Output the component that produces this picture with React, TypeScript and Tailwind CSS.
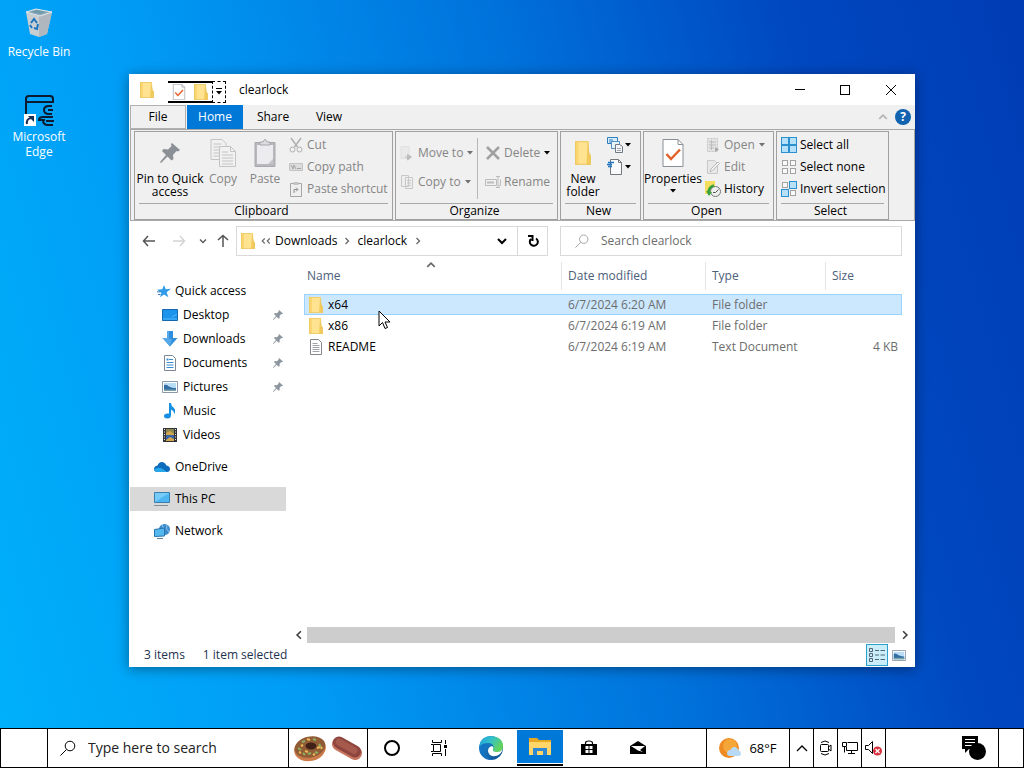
import { type ReactNode } from "react";
import { clsx } from "clsx";

type IconProps = { className?: string };

function FolderIcon({ className = "h-4 w-4" }: IconProps) {
  return (
    <svg viewBox="1 1 14 16" className={className} preserveAspectRatio="none" aria-hidden>
      <path d="M1 1h12v16H1z" fill="#ffe391" />
      <path d="M1 1h3v16H1z" fill="#fbd56f" />
      <path d="M12 2l2 8h1v7h-4z" fill="#f2ca5c" />
      <path d="M1.500 1.500h11l.5 9 1.500 1v5h-13z" fill="none" stroke="#ecc864" strokeWidth="0.800" />
    </svg>
  );
}

function PinIcon({ className = "h-3 w-3" }: IconProps) {
  return (
    <svg viewBox="0 0 20 20" className={className} fill="currentColor" aria-hidden>
      <path d="M12 0l8 7-2 1.500-1.500-.5-3.500 4 .5 4-2 1.500-4-4L1 20l-1-1 6-7-4-4 1.500-2 4.500.5 3.500-3.500-.5-2z" />
    </svg>
  );
}

function PropertiesIcon({ className = "h-7 w-6" }: IconProps) {
  return (
    <svg viewBox="0 0 22 28" className={className} aria-hidden>
      <path d="M1 .5h15l5 5v22H1z" fill="#fff" stroke="#8a8f96" />
      <path d="M16 .5v5h5" fill="none" stroke="#8a8f96" />
      <path d="M4.500 15l4.500 5 9-9.500" fill="none" stroke="#e2622a" strokeWidth="2.500" />
    </svg>
  );
}

function CopyIcon({ className = "h-[30px] w-7" }: IconProps) {
  return (
    <svg viewBox="0 0 28 30" className={className} fill="#f1f1f1" stroke="#c4c4c4" aria-hidden>
      <path d="M2 1.500h11l4 4v16H2z" />
      <path d="M4.500 6h8M4.500 9h8M4.500 12h6M4.500 15h6M4.500 18h6" />
      <path d="M10.500 8.500h11l5 5v15h-16z" />
      <path d="M21.500 8.500v5h5M13 14h6M13 17h11M13 20h11M13 23h11M13 26h11" fill="none" />
    </svg>
  );
}

function PasteIcon() {
  return (
    <svg viewBox="0 0 22 28" className="h-7 w-[22px]" aria-hidden>
      <path d="M1 3.500h20v24H1z" fill="#b9b9bd" stroke="#a9a9ae" />
      <path d="M3 6h16v19H3z" fill="#ececee" />
      <path d="M14 25l5-5v5z" fill="#c4c4c8" />
      <path d="M6 6V3h3q2-5 4 0h3v3z" fill="#dedee0" stroke="#a5a5aa" />
    </svg>
  );
}

function CutIcon() {
  return (
    <svg viewBox="0 0 14 16" className="h-4 w-3.5" fill="none" stroke="#b0b0b0" aria-hidden>
      <path d="M2 1l6.500 9M12 1L5.500 10" strokeWidth="1.500" />
      <circle cx="3.500" cy="12.500" r="2.500" />
      <circle cx="10.500" cy="12.500" r="2.500" />
    </svg>
  );
}

function CopyPathIcon() {
  return (
    <svg viewBox="0 0 14 10" className="h-2.5 w-3.5" aria-hidden>
      <path d="M.5 1.500h13v7H.5z" fill="#dcdcdc" stroke="#c4c4c4" />
      <path d="M2 3l2 4 1-4 2 4M8 6.500h4" fill="none" stroke="#a4a4a4" />
    </svg>
  );
}

function PasteShortcutIcon() {
  return (
    <svg viewBox="0 0 14 15" className="h-[15px] w-3.5" aria-hidden>
      <path d="M1.500 1.500h11v13h-11z" fill="#efefef" stroke="#a5a5a5" />
      <path d="M4.500 0h5v3h-5z" fill="#c4c4c4" />
      <path d="M5 11V7.500h3.500M7 5.500l2 2-2 2" fill="none" stroke="#909090" />
    </svg>
  );
}

function MoveIcon() {
  return (
    <svg viewBox="0 0 14 16" className="h-4 w-3.5" aria-hidden>
      <path d="M1 1.500h8v12H1z" fill="#e9e9e9" stroke="#e0e0e0" />
      <path d="M5 12h4M7.500 9.500l4 2.500-4 3z" fill="#bcbcbc" stroke="#bcbcbc" />
    </svg>
  );
}

function CopyToIcon() {
  return (
    <svg viewBox="0 0 14 16" className="h-4 w-3.5" fill="#eee" stroke="#c8c8c8" aria-hidden>
      <path d="M1.500 1.500h7v11h-7zM5.500 3.500h7v11h-7z" />
      <path d="M7 6.500h4M7 9h4M7 11.500h4" />
    </svg>
  );
}

function DeleteIcon() {
  return (
    <svg viewBox="0 0 14 14" className="h-3.5 w-3.5" aria-hidden>
      <path d="M1 1l12 12M13 1L1 13" stroke="#a0a0a0" strokeWidth="2.500" />
    </svg>
  );
}

function RenameIcon() {
  return (
    <svg viewBox="0 0 16 14" className="h-3.5 w-4" fill="none" stroke="#bcbcbc" aria-hidden>
      <path d="M.5 4.500h11v6H.5zM15.500 4.500v6h-2M11 1.500h4M13 1.500v11M11 12.500h4" />
      <path d="M2 7.500h7" strokeWidth="2" />
    </svg>
  );
}

function NewItemIcon() {
  return (
    <svg viewBox="0 0 16 16" className="h-4 w-4" aria-hidden>
      <path d="M.5.5h10v6H.5z" fill="#dbeefb" stroke="#2f7ec0" />
      <path d="M2 3h4M2 5h3" stroke="#2f7ec0" />
      <path d="M4.500 4.500h8v7h-8z" fill="#e8f4fc" stroke="#5591c2" />
      <path d="M8.500 7.500h4l3 2v6h-7z" fill="#f5f5f5" stroke="#707a85" />
      <path d="M10 11.500h4M10 13.500h4" stroke="#a2a9b0" />
    </svg>
  );
}

function EasyAccessIcon() {
  return (
    <svg viewBox="0 0 16 16" className="h-4 w-4" aria-hidden>
      <path d="M3.500.5h8l3 3v12h-11z" fill="#fafafa" stroke="#75797e" />
      <path d="M11.500.5v3h3" fill="none" stroke="#75797e" />
      <path d="M1 3.500h6M0 5.500h5M1 7.500h4" fill="none" stroke="#1f74c4" strokeWidth="1.300" />
    </svg>
  );
}

function OpenIcon() {
  return (
    <svg viewBox="0 0 14 16" className="h-4 w-3.5" aria-hidden>
      <path d="M1.500 1.500h10v13h-10z" fill="#e4e4e4" stroke="#c4c4c4" strokeDasharray="2 1" />
      <path d="M3 5h7M3 8h7M3 11h5M5.500 3v10" stroke="#bcbcbc" />
      <path d="M9 10l4 2.500L9 15z" fill="#a9a9a9" />
    </svg>
  );
}

function EditIcon() {
  return (
    <svg viewBox="0 0 14 16" className="h-4 w-3.5" aria-hidden>
      <path d="M1.500 1.500h7l3 3v10h-10z" fill="#e8e8e8" stroke="#c8c8c8" />
      <path d="M4 13l1-3 7-7 1.500 1.500-7 7z" fill="#f5f5f5" stroke="#b9b9b9" />
    </svg>
  );
}

function HistoryIcon() {
  return (
    <svg viewBox="0 0 16 16" className="h-4 w-4" aria-hidden>
      <path d="M0 0h10v13H0z" fill="#f5de5e" />
      <circle cx="10.500" cy="10.500" r="5" fill="#edf0ed" stroke="#777" />
      <path d="M10.500 11.500l3-3M10.500 11.500H8" fill="none" stroke="#555" />
      <path d="M3.500 12q0-6 5.500-7.500" fill="none" stroke="#38a13c" strokeWidth="2.500" />
      <path d="M1 10l3 5 3-4z" fill="#38a13c" />
    </svg>
  );
}

function TilesIcon({ filled }: { filled: boolean[] }) {
  const spots = [
    [1, 1],
    [9, 1],
    [1, 9],
    [9, 9],
  ];
  return (
    <svg viewBox="0 0 16 16" className="h-4 w-4" aria-hidden>
      {spots.map(([x, y], i) => (
        <rect
          key={i}
          x={x - (filled[i] ? 0.5 : -0.5)}
          y={y - (filled[i] ? 0.5 : -0.5)}
          width={filled[i] ? 7 : 5}
          height={filled[i] ? 7 : 5}
          fill={filled[i] ? "#b5e2fa" : "#fafafa"}
          stroke={filled[i] ? "#2b8fd0" : "#a3a3a3"}
        />
      ))}
    </svg>
  );
}

function Caret({ className = "text-black" }: IconProps) {
  return (
    <svg viewBox="0 0 6 4" className={clsx("h-1 w-1.5 shrink-0", className)} fill="currentColor" aria-hidden>
      <path d="M0 0h6L3 3.500z" />
    </svg>
  );
}

function Chevron({ className = "h-2 w-1.5" }: IconProps) {
  return (
    <svg viewBox="0 0 6 8" className={className} fill="none" stroke="currentColor" strokeWidth="1.300" aria-hidden>
      <path d="M1.500 1l3 3-3 3" />
    </svg>
  );
}

function StarIcon() {
  return (
    <svg viewBox="0 0 16 16" className="h-3.5 w-3.5" aria-hidden>
      <path d="M8 1l2 5 6-.5-5 4L13 15l-5-3-4.500 3 1.500-5L0 6.500 6 6z" fill="#2f9be8" />
      <path d="M0 9h4M1 12h3" stroke="#1667ad" />
    </svg>
  );
}

function DesktopIcon() {
  return (
    <svg viewBox="0 0 16 14" className="h-3.5 w-4" aria-hidden>
      <path d="M.5 1.500h15v11H.5z" fill="#1c94ec" stroke="#1468b2" />
      <path d="M1 11h14M10 9l5-3" stroke="#55b8f8" />
    </svg>
  );
}

function DownloadsIcon() {
  return (
    <svg viewBox="0 0 16 16" className="h-4 w-4" aria-hidden>
      <path d="M5 0h6v7h4.500L8 15.500.5 7H5z" fill="#2f8fdc" />
      <path d="M5 0h2v8h3L8 15.500.5 7H5z" fill="#55a9e8" />
    </svg>
  );
}

function DocumentsIcon() {
  return (
    <svg viewBox="0 0 16 16" className="h-4 w-4" aria-hidden>
      <path d="M2.500.5h8l3 3v12h-11z" fill="#fff" stroke="#7b8794" />
      <path d="M7 4.500h4M4.500 7.500h7M4.500 10h7M4.500 12.500h7" stroke="#3a8bd0" />
      <path d="M4.500 3.500h2v2h-2z" fill="#3a8bd0" />
    </svg>
  );
}

function PicturesIcon({ className = "h-3 w-4" }: IconProps) {
  return (
    <svg viewBox="0 0 16 12" className={className} preserveAspectRatio="none" aria-hidden>
      <path d="M.5.5h15v11H.5z" fill="#fff" stroke="#8b98a7" />
      <path d="M2 2h12v8H2z" fill="#b8dcf6" />
      <path d="M2 4q3-1 5 1.500 4 2 7 1.500v3H2z" fill="#326da5" />
      <path d="M2 8.500h12V10H2z" fill="#79a5a4" />
    </svg>
  );
}

function MusicIcon() {
  return (
    <svg viewBox="0 0 16 16" className="h-4 w-4" aria-hidden>
      <path d="M7 0h2q0 3 2.500 4.500 3 2.500.5 7 .5-3.500-3-5V12q0 3.500-3.500 3.500Q2 15.500 2 13q0-2.500 3.500-2.500H7z" fill="#168fe3" />
    </svg>
  );
}

function VideosIcon() {
  return (
    <svg viewBox="0 0 16 16" className="h-4 w-4" aria-hidden>
      <path d="M1 1h14v14H1z" fill="#323338" />
      <path d="M4 2h8v6H4z" fill="#8a8850" />
      <path d="M4 8h8v6H4z" fill="#3564a8" />
      <path d="M4 6l4-2 4 3v1H4zM4 13l4-3 4 2v2H4z" fill="#d3a54d" />
      <path d="M2.500 2v12M13.500 2v12" stroke="#e5e5e5" strokeDasharray="1 1.500" />
    </svg>
  );
}

function CloudIcon() {
  return (
    <svg viewBox="0 0 16 12" className="h-3 w-4" aria-hidden>
      <path d="M3.500 11Q0 11 0 8t3.500-3.500Q5 .5 8.500 1q3 .5 4 3.500Q16 5 16 8t-3 3z" fill="#0f6cbd" />
      <path d="M3.500 11Q1 11 0 8.500q4-3 8-1l5 3.500z" fill="#28a8ea" />
    </svg>
  );
}

function ComputerIcon() {
  return (
    <svg viewBox="0 0 16 16" className="h-4 w-4" aria-hidden>
      <path d="M.5 1.500h15v10H.5z" fill="#4db5f2" stroke="#3a7eae" />
      <path d="M1 2h14L1 11z" fill="#77cbf8" />
      <path d="M0 14.500h14" stroke="#7f8d99" />
    </svg>
  );
}

function NetworkIcon() {
  return (
    <svg viewBox="0 0 16 16" className="h-4 w-4" aria-hidden>
      <circle cx="10.500" cy="6.500" r="5.500" fill="#3c8ccb" />
      <path d="M8 2q3 3 2 9M13 2q-2 4 2 7" fill="none" stroke="#8cc8ec" />
      <path d="M.5 6.500l10-1.500v8L.5 13.500z" fill="#55b8ee" stroke="#2676b0" />
      <path d="M3 15.500h6" stroke="#5c7c94" />
    </svg>
  );
}

function TextFileIcon() {
  return (
    <svg viewBox="0 0 14 16" className="h-4 w-3.5" aria-hidden>
      <path d="M1.500.5h8l3 3v12h-11z" fill="#fff" stroke="#83878c" />
      <path d="M3.500 4.500h5M3.500 6.500h7M3.500 8.500h7M3.500 10.500h7M3.500 12.500h7" stroke="#a0a4a8" />
    </svg>
  );
}

function MagnifierIcon({ className }: IconProps) {
  return (
    <svg viewBox="0 0 16 16" className={className} fill="none" stroke="currentColor" aria-hidden>
      <circle cx="10" cy="6" r="4.800" />
      <path d="M6.500 9.500L.5 15.500" />
    </svg>
  );
}

function RecycleBinIcon() {
  return (
    <svg viewBox="0 0 28 30" className="h-[30px] w-7" aria-hidden>
      <path d="M1 4l4 22 9 3 8-3 5-22-13 4z" fill="#c9ced3" />
      <path d="M14 8l13-4-5 22-8 3z" fill="#b0b7bf" />
      <path d="M1 4l10-3 16 3-12 4z" fill="#8faab8" stroke="#e3e8eb" />
      <path d="M6 4l6-2 9 2-6 2z" fill="#6d9bae" />
      <path d="M6 15l3-4 3 4M13 16l-1 5-3-1M7 20l-2-3" fill="none" stroke="#1c75c0" strokeWidth="2" />
    </svg>
  );
}

function EdgeShortcutIcon() {
  return (
    <svg viewBox="0 0 32 34" className="h-[34px] w-8" fill="none" stroke="#0b1a2e" strokeWidth="2" aria-hidden>
      <path d="M3 21V6q0-3 3-3h21q3 0 3 3v3H3" />
      <path d="M29 13h-3q-5 0-5 4t5 4h3M25 17h5M30 24H20q-4 0-4 3h6M20 27q0 5 5 5h5M23 28h8" />
      <path d="M1 21h12v12H1z" fill="#fff" stroke="none" />
      <path d="M4 31q-1-5 4-6" stroke="#1b2f57" />
      <path d="M5 23h6v6z" fill="#1b2f57" stroke="none" />
    </svg>
  );
}

function DonutIcon() {
  return (
    <svg viewBox="0 0 34 28" className="h-7 w-[34px]" aria-hidden>
      <ellipse cx="17" cy="15" rx="16" ry="12" fill="#cc7c4b" transform="rotate(-12 17 15)" />
      <ellipse cx="17" cy="13" rx="15.500" ry="10.500" fill="#915b36" transform="rotate(-12 17 13)" />
      <ellipse cx="18" cy="12" rx="5.500" ry="3.500" fill="#3f2118" />
      <path
        d="M5 14l3 2M9 8l3-1M15 20l3-1M22 18l3 1M26 10l2 3M20 5l3 1M10 19l2 2"
        stroke="#8bae62"
        strokeWidth="2"
      />
      <path d="M8 12l2-1M12 17l3 1M24 14l3-1M14 5l3 1M20 21l2-1M6 18l2 1M28 15l1-2" stroke="#eabb59" strokeWidth="2" />
    </svg>
  );
}

function EclairIcon() {
  return (
    <svg viewBox="0 0 32 26" className="h-[26px] w-8" aria-hidden>
      <path d="M8 9l16 9" stroke="#c87562" strokeWidth="14" strokeLinecap="round" />
      <path d="M8 7.500l16 9" stroke="#8d453e" strokeWidth="12" strokeLinecap="round" />
      <path d="M8 7l15 8.500" stroke="#a6594d" strokeWidth="7" strokeLinecap="round" />
    </svg>
  );
}

function TaskViewIcon() {
  return (
    <svg viewBox="0 0 18 16" className="h-4 w-[18px]" fill="none" stroke="#000" aria-hidden>
      <path d="M1.500 0v2.500h9V0M1.500 16v-2.500h9V16M2.500 4.500h7v7h-7zM14.500 0v4M14.500 9v7M0 4.500h2M0 11.500h2" />
      <path d="M13 5h3v3h-3z" fill="#000" stroke="none" />
    </svg>
  );
}

function EdgeIcon() {
  return (
    <svg viewBox="0 0 24 24" className="h-6 w-6" aria-hidden>
      <defs>
        <linearGradient id="edge-top" x1="0" y1="0" x2="1" y2="0.500">
          <stop offset="0" stopColor="#1b9de2" />
          <stop offset="0.500" stopColor="#35c1c5" />
          <stop offset="1" stopColor="#66d459" />
        </linearGradient>
        <linearGradient id="edge-bottom" x1="0" y1="0" x2="1" y2="1">
          <stop offset="0" stopColor="#1b90dd" />
          <stop offset="1" stopColor="#114a8b" />
        </linearGradient>
      </defs>
      <circle cx="12" cy="12" r="12" fill="url(#edge-bottom)" />
      <path d="M.5 10Q2 0 12 0q12 1 12 10 0 6-6 6-5 0-4-3 2-5-4-6-6-.5-9.500 3z" fill="url(#edge-top)" />
      <path d="M14 13q-1 3 4 3 4 0 5.500-3.500-.5 5-5 7Q10 22 9 15q0-4 4-5 2 1 1 3z" fill="#fff" />
      <path d="M10 8q-7 3-4 10 2 5 9 6-8 .5-12-5Q-1 12 4 8z" fill="#1474c4" />
    </svg>
  );
}

function ExplorerIcon() {
  return (
    <svg viewBox="0 0 24 20" className="h-5 w-6" aria-hidden>
      <path d="M1 1h8l2 2h12v15H1z" fill="#e9a824" />
      <path d="M1 5h22v13H1z" fill="#ffd667" />
      <path d="M5 18v-7h14v7h-4v-4H9v4z" fill="#3087d4" />
      <path d="M9 14h6v4H9z" fill="#ffd667" />
    </svg>
  );
}

function StoreIcon() {
  return (
    <svg viewBox="0 0 16 16" className="h-4 w-4" aria-hidden>
      <path d="M4.500 5V3q0-2 3.500-2t3.500 2v2" fill="none" stroke="#000" strokeWidth="1.200" />
      <path d="M0 4h16v11H0z" fill="#000" />
      <path d="M4.500 6h3v3h-3zM8.500 6h3v3h-3zM4.500 10h3v3h-3zM8.500 10h3v3h-3z" fill="#fff" />
    </svg>
  );
}

function MailIcon() {
  return (
    <svg viewBox="0 0 16 14" className="h-3.5 w-4" aria-hidden>
      <path d="M0 5l8-5 8 5v8H0z" fill="#000" />
      <path d="M1 5h14l-5 4 3 2-5-1.500z" fill="#fff" />
    </svg>
  );
}

function WeatherIcon() {
  return (
    <svg viewBox="0 0 22 20" className="h-5 w-[22px]" aria-hidden>
      <circle cx="10" cy="10" r="10" fill="#ee8b22" />
      <circle cx="11" cy="8" r="7" fill="#f5a638" />
      <path d="M11 18q-3 0-3-3t3.500-3q1-3 4-3t4 3.500q2.500.5 2.500 3t-3 2.500z" fill="#b8d9f3" />
    </svg>
  );
}

function MeetNowIcon() {
  return (
    <svg viewBox="0 0 14 16" className="h-4 w-3.5" fill="none" stroke="#000" aria-hidden>
      <rect x="1.500" y="4.500" width="8" height="7" rx="1" />
      <path d="M9.500 7l2.500-2v6l-2.500-2M2 2.500Q6 -.5 10 2.500M2 13.500q4 3 8 0" />
    </svg>
  );
}

function EthernetIcon() {
  return (
    <svg viewBox="0 0 16 14" className="h-3.5 w-4" fill="none" stroke="#000" aria-hidden>
      <path d="M5.500 1.500h10v8h-11V6M9.500 9.500v3M6 12.500h7M.5 1.500h4v4h-4zM2.500 5.500v6" />
    </svg>
  );
}

function MutedIcon() {
  return (
    <svg viewBox="0 0 17 16" className="h-4 w-[17px]" aria-hidden>
      <path d="M.5 5.500h3l4-4v12l-4-4h-3z" fill="none" stroke="#000" />
      <circle cx="12.500" cy="11" r="4.500" fill="#d9303e" />
      <path d="M10.500 9l4 4M14.500 9l-4 4" stroke="#fff" strokeWidth="1.300" />
    </svg>
  );
}

function NotificationsIcon() {
  return (
    <svg viewBox="0 0 24 24" className="h-6 w-6" aria-hidden>
      <path d="M0 0h16v13H7l-4 4v-4H0z" fill="#000" />
      <path d="M3 3.500h10M3 6.500h10M3 9.500h7" stroke="#fff" />
      <circle cx="15.500" cy="15.500" r="8.500" fill="#000" />
    </svg>
  );
}

function RibbonGroup({ label, className, children }: { label: string; className: string; children: ReactNode }) {
  return (
    <section className={clsx("flex h-[89px] shrink-0 flex-col border border-[#a0a0a0] px-1", className)}>
      <div className="flex min-h-0 flex-1 pt-0.5">{children}</div>
      <h2 className="border-t border-[#a8a8a8] pr-1 pb-px text-center leading-[14px]">{label}</h2>
    </section>
  );
}

type RibbonButtonProps = { icon: ReactNode; label: ReactNode; disabled?: boolean; caret?: boolean; className?: string };

function TallButton({ icon, label, disabled, caret, className }: RibbonButtonProps) {
  return (
    <button
      type="button"
      disabled={disabled}
      className={clsx(
        "flex shrink-0 flex-col items-center leading-[13px]",
        disabled ? "text-[#858585]" : "text-black",
        className,
      )}
    >
      <span className="flex h-[38px] shrink-0 items-center justify-center">{icon}</span>
      <span>{label}</span>
      {caret ? <Caret className="mt-1 text-black" /> : null}
    </button>
  );
}

function SmallButton({ icon, label, disabled, caret, className = "h-[22px]" }: RibbonButtonProps) {
  return (
    <button
      type="button"
      disabled={disabled}
      className={clsx("flex items-center gap-1 whitespace-nowrap", disabled ? "text-[#858585]" : "text-black", className)}
    >
      <span className="flex w-3.5 shrink-0 justify-center [&>svg]:shrink-0">{icon}</span>
      {label}
      {caret ? <Caret className={disabled ? "text-[#707070]" : "text-black"} /> : null}
    </button>
  );
}

function Ribbon() {
  return (
    <div className="flex h-[92px] gap-0.5 overflow-hidden border border-[#a8a8a8] bg-[#f0f0f0] pt-px pl-[3px]">
      <RibbonGroup label="Clipboard" className="w-[259px]">
        <TallButton
          className="w-[62px] whitespace-nowrap"
          icon={<PinIcon className="h-5 w-5 text-[#8b9096]" />}
          label={
            <>
              Pin to Quick
              <br />
              access
            </>
          }
        />
        <TallButton className="w-11" icon={<CopyIcon />} label="Copy" disabled />
        <TallButton className="w-10" icon={<PasteIcon />} label="Paste" disabled />
        <div className="ml-1 flex flex-col">
          <SmallButton icon={<CutIcon />} label="Cut" disabled />
          <SmallButton icon={<CopyPathIcon />} label="Copy path" disabled />
          <SmallButton icon={<PasteShortcutIcon />} label="Paste shortcut" disabled />
        </div>
      </RibbonGroup>
      <RibbonGroup label="Organize" className="w-[163px]">
        <div className="my-1 flex w-[78px] flex-col border-r border-[#b8b8b8]">
          <SmallButton className="h-[29px]" icon={<MoveIcon />} label="Move to" disabled caret />
          <SmallButton className="h-[29px]" icon={<CopyToIcon />} label="Copy to" disabled caret />
        </div>
        <div className="my-1 ml-2 flex flex-col">
          <button type="button" className="flex h-[29px] items-center gap-1 text-[#858585]">
            <DeleteIcon />
            Delete
            <Caret />
          </button>
          <SmallButton className="h-[29px]" icon={<RenameIcon />} label="Rename" disabled />
        </div>
      </RibbonGroup>
      <RibbonGroup label="New" className="w-[81px]">
        <TallButton className="w-9" icon={<FolderIcon className="h-6 w-4" />} label="New folder" />
        <div className="ml-1.5 flex flex-col">
          <button type="button" aria-label="New item" className="flex h-[22px] items-center gap-0.5">
            <NewItemIcon />
            <Caret />
          </button>
          <button type="button" aria-label="Easy access" className="flex h-[22px] items-center gap-0.5">
            <EasyAccessIcon />
            <Caret />
          </button>
        </div>
      </RibbonGroup>
      <RibbonGroup label="Open" className="w-[131px]">
        <TallButton className="w-[50px]" icon={<PropertiesIcon />} label="Properties" caret />
        <div className="ml-2 flex flex-col">
          <SmallButton icon={<OpenIcon />} label="Open" disabled caret />
          <SmallButton icon={<EditIcon />} label="Edit" disabled />
          <SmallButton icon={<HistoryIcon />} label="History" />
        </div>
      </RibbonGroup>
      <RibbonGroup label="Select" className="w-[113px]">
        <div className="ml-px flex flex-col">
          <SmallButton icon={<TilesIcon filled={[true, true, true, true]} />} label="Select all" />
          <SmallButton icon={<TilesIcon filled={[false, false, false, false]} />} label="Select none" />
          <SmallButton icon={<TilesIcon filled={[false, true, true, false]} />} label="Invert selection" />
        </div>
      </RibbonGroup>
    </div>
  );
}

function TitleBar() {
  return (
    <header className="flex h-[31px] shrink-0 items-center pl-2.5">
      <FolderIcon className="h-4 w-3.5" />
      <div className="mt-1 ml-3.5 flex h-[22px] items-stretch">
        <div className="flex items-center gap-2 border-y-2 border-black px-1">
          <button type="button" aria-label="Properties">
            <PropertiesIcon className="h-4 w-3.5" />
          </button>
          <button type="button" aria-label="New folder">
            <FolderIcon className="h-4 w-3.5" />
          </button>
        </div>
        <button
          type="button"
          aria-label="Customize Quick Access Toolbar"
          className="flex w-3.5 flex-col items-center justify-center gap-0.5 border border-dashed border-black"
        >
          <span className="h-px w-1.5 bg-black" />
          <Caret />
        </button>
      </div>
      <h1 className="ml-[13px] flex-1">clearlock</h1>
      <button type="button" aria-label="Minimize" className="flex h-full w-[45px] items-center justify-center">
        <span className="h-px w-2.5 bg-black" />
      </button>
      <button type="button" aria-label="Maximize" className="flex h-full w-[45px] items-center justify-center">
        <span className="h-2.5 w-2.5 border border-black" />
      </button>
      <button type="button" aria-label="Close" className="flex h-full w-12 items-center justify-center">
        <svg viewBox="0 0 10 10" className="h-2.5 w-2.5" stroke="#000" aria-hidden>
          <path d="M0 0l10 10M10 0L0 10" />
        </svg>
      </button>
    </header>
  );
}

function TabBar() {
  return (
    <nav className="flex h-6 shrink-0 items-stretch bg-[#f0f0f0]">
      <button type="button" className="w-14 border border-[#b0b0b0]">
        File
      </button>
      <button type="button" className="ml-px w-14 bg-[#0078d7] text-white">
        Home
      </button>
      <button type="button" className="ml-0.5 w-14">
        Share
      </button>
      <button type="button" className="w-14">
        View
      </button>
      <div className="flex flex-1 items-center justify-end gap-2 pr-1">
        <button type="button" aria-label="Minimize the Ribbon" className="text-[#b4b4b4]">
          <Chevron className="h-2.5 w-2 -rotate-90" />
        </button>
        <button
          type="button"
          aria-label="Help"
          className="h-4 w-4 rounded-full bg-[#1263b0] font-bold leading-4 text-white"
        >
          ?
        </button>
      </div>
    </nav>
  );
}

function Arrow({ className }: IconProps) {
  return (
    <svg viewBox="0 0 14 12" className={clsx("h-3 w-3.5", className)} fill="none" stroke="currentColor" strokeWidth="1.500" aria-hidden>
      <path d="M13 6H1.500M6 1L1.500 6 6 11" />
    </svg>
  );
}

function AddressRow() {
  return (
    <div className="mt-[5px] flex h-[30px] shrink-0 items-stretch pr-[13px] pl-3">
      <div className="flex w-[94px] shrink-0 items-center text-[#555]">
        <button type="button" aria-label="Back">
          <Arrow />
        </button>
        <button type="button" aria-label="Forward" className="ml-4 text-[#d4d4d4]">
          <Arrow className="rotate-180" />
        </button>
        <button type="button" aria-label="Recent locations" className="ml-3.5">
          <Chevron className="h-2 w-1.5 rotate-90" />
        </button>
        <button type="button" aria-label="Up" className="ml-2.5">
          <Arrow className="rotate-90" />
        </button>
      </div>
      <div className="flex flex-1 items-center border border-[#d9d9d9] pl-1">
        <FolderIcon className="h-4 w-3.5" />
        <span className="ml-1.5 flex text-[#666]">
          <Chevron className="h-2 w-[5px] rotate-180" />
          <Chevron className="h-2 w-[5px] rotate-180" />
        </span>
        <a href="#downloads" className="ml-1">
          Downloads
        </a>
        <Chevron className="ml-1.5 h-2 w-1.5 text-[#666]" />
        <a href="#clearlock" className="ml-2">
          clearlock
        </a>
        <Chevron className="ml-2 h-2 w-1.5 text-[#666]" />
        <button type="button" aria-label="Previous locations" className="ml-auto flex h-full w-[30px] items-center justify-center">
          <svg viewBox="0 0 10 7" className="h-[7px] w-2.5" fill="none" stroke="#000" strokeWidth="2" aria-hidden>
            <path d="M1 1l4 4 4-4" />
          </svg>
        </button>
        <button
          type="button"
          aria-label="Refresh"
          className="flex h-full w-[30px] items-center justify-center border-l border-[#d9d9d9]"
        >
          <svg viewBox="0 0 12 14" className="h-3.5 w-3" fill="none" stroke="#000" strokeWidth="2" aria-hidden>
            <path d="M9 4.500a4 4 0 1 1-5 .5M1 2h4.500v5" />
          </svg>
        </button>
      </div>
      <label className="ml-3 flex w-[342px] items-center gap-3 border border-[#d9d9d9] pl-3.5">
        <MagnifierIcon className="h-3.5 w-3.5 text-[#999]" />
        <input
          type="text"
          aria-label="Search clearlock"
          placeholder="Search clearlock"
          className="min-w-0 flex-1 outline-none placeholder:text-[#6b6b6b]"
        />
      </label>
    </div>
  );
}

const quickAccess = [
  { name: "Desktop", icon: <DesktopIcon />, pinned: true },
  { name: "Downloads", icon: <DownloadsIcon />, pinned: true },
  { name: "Documents", icon: <DocumentsIcon />, pinned: true },
  { name: "Pictures", icon: <PicturesIcon />, pinned: true },
  { name: "Music", icon: <MusicIcon />, pinned: false },
  { name: "Videos", icon: <VideosIcon />, pinned: false },
];

const places = [
  { name: "OneDrive", icon: <CloudIcon />, current: false },
  { name: "This PC", icon: <ComputerIcon />, current: true },
  { name: "Network", icon: <NetworkIcon />, current: false },
];

function Sidebar() {
  return (
    <nav className="w-[156px] shrink-0 pt-[23px]">
      <a href="#quick-access" className="flex h-6 items-center gap-1 pl-[27px]">
        <StarIcon />
        Quick access
      </a>
      <ul>
        {quickAccess.map((item) => (
          <li key={item.name}>
            <a href={`#${item.name.toLowerCase()}`} className="flex h-6 items-center gap-1 pr-[3px] pl-8">
              <span className="flex w-4 justify-center">{item.icon}</span>
              <span className="flex-1 pl-px">{item.name}</span>
              {item.pinned ? <PinIcon className="h-2.5 w-2.5 text-[#8d969e]" /> : null}
            </a>
          </li>
        ))}
      </ul>
      <ul className="mt-2 space-y-2">
        {places.map((item) => (
          <li key={item.name}>
            <a
              href={`#${item.name.toLowerCase()}`}
              className={clsx("flex h-6 items-center gap-[5px] pl-6", item.current && "bg-[#d9d9d9]")}
            >
              {item.icon}
              {item.name}
            </a>
          </li>
        ))}
      </ul>
    </nav>
  );
}

const files = [
  { name: "x64", icon: <FolderIcon className="h-4 w-3.5" />, date: "6/7/2024 6:20 AM", type: "File folder", size: "", selected: true },
  { name: "x86", icon: <FolderIcon className="h-4 w-3.5" />, date: "6/7/2024 6:19 AM", type: "File folder", size: "", selected: false },
  { name: "README", icon: <TextFileIcon />, date: "6/7/2024 6:19 AM", type: "Text Document", size: "4 KB", selected: false },
];

function FileTable() {
  return (
    <table className="w-full table-fixed border-separate border-spacing-0 text-[#6d6d6d]">
      <thead>
        <tr className="h-7 text-left text-[#4c607a]">
          <th className="relative pl-[3px] font-normal">
            Name
            <Chevron className="absolute -top-0.5 left-1/2 h-2.5 w-2 -translate-x-1.5 -rotate-90 text-[#666]" />
          </th>
          <th className="w-36 border-l border-[#e5e5e5] pl-1.5 font-normal">Date modified</th>
          <th className="w-[120px] border-l border-[#e5e5e5] pl-1.5 font-normal">Type</th>
          <th className="w-[77px] border-l border-[#e5e5e5] pl-1.5 font-normal">Size</th>
        </tr>
      </thead>
      <tbody>
        <tr className="h-1" />
        {files.map((file) => (
          <tr
            key={file.name}
            className={clsx(
              "h-[21px]",
              file.selected &&
                "bg-[#cce8ff] [&>td]:border-y [&>td]:border-[#99d1ff] [&>td:first-child]:border-l [&>td:last-child]:border-r",
            )}
          >
            <td className={clsx("p-0 text-black", file.selected ? "pl-1" : "pl-[5px]")}>
              <span className="flex items-center gap-[5px]">
                {file.icon}
                {file.name}
              </span>
            </td>
            <td className="p-0 pl-[7px]">{file.date}</td>
            <td className="p-0 pl-[7px]">{file.type}</td>
            <td className="p-0 pr-1 text-right">{file.size}</td>
          </tr>
        ))}
      </tbody>
    </table>
  );
}

function ExplorerWindow() {
  return (
    <main className="absolute top-[74px] right-[109px] bottom-[61px] left-[129px] flex flex-col bg-white pl-px shadow-[0_2px_12px_rgba(0,0,0,0.4)]">
      <TitleBar />
      <TabBar />
      <Ribbon />
      <AddressRow />
      <div className="flex min-h-0 flex-1">
        <Sidebar />
        <div className="flex min-w-0 flex-1 flex-col pl-1">
          <div className="flex-1 pt-1.5 pr-[13px] pl-3.5">
            <FileTable />
          </div>
          <div className="flex h-4 items-center text-[#404040]">
            <button type="button" aria-label="Scroll left" className="flex w-[17px] justify-center">
              <Chevron className="h-2.5 w-2 rotate-180" />
            </button>
            <div className="h-4 flex-1 bg-[#cdcdcd]" />
            <button type="button" aria-label="Scroll right" className="flex w-5 justify-center">
              <Chevron className="h-2.5 w-2" />
            </button>
          </div>
        </div>
      </div>
      <footer className="flex h-6 shrink-0 items-center pr-[9px] pl-3.5 text-[#1e3250]">
        <span>3 items</span>
        <span className="ml-[18px]">1 item selected</span>
        <button
          type="button"
          aria-label="Details view"
          className="ml-auto flex h-[22px] w-[22px] items-center justify-center border border-[#2ba0cc] bg-[#c9eefa]"
        >
          <svg viewBox="0 0 16 14" className="h-3.5 w-4" fill="none" stroke="#526575" aria-hidden>
            <path d="M.5.5h3v3h-3zM.5 5.500h3v3h-3zM.5 10.500h3v3h-3zM6 2.500h4M11.500 2.500H16M6 7h4M11.500 7H16M6 11.500h4M11.500 11.500H16" />
          </svg>
        </button>
        <button type="button" aria-label="Large icons view" className="ml-1">
          <PicturesIcon className="h-[11px] w-3.5" />
        </button>
      </footer>
    </main>
  );
}

function DesktopShortcut({ icon, label }: { icon: ReactNode; label: string }) {
  return (
    <button type="button" className="flex w-[70px] flex-col items-center leading-[15px] text-white">
      <span className="flex h-9 items-start">{icon}</span>
      {label}
    </button>
  );
}

function Taskbar() {
  const app = "flex w-12 shrink-0 items-center justify-center";
  const tray = "flex w-6 shrink-0 items-center justify-center border-r border-black";
  return (
    <footer className="flex h-10 shrink-0 items-stretch border-y border-black bg-white text-sm">
      <button type="button" aria-label="Start" className="w-12 shrink-0 border-x border-black" />
      <label className="flex w-60 shrink-0 items-center gap-3 pl-3">
        <MagnifierIcon className="h-4 w-4" />
        <input
          type="text"
          aria-label="Search"
          placeholder="Type here to search"
          className="min-w-0 flex-1 outline-none placeholder:text-[#222]"
        />
      </label>
      <button type="button" aria-label="Search highlights" className="flex w-20 shrink-0 items-center justify-center gap-1 border-x border-black">
        <DonutIcon />
        <EclairIcon />
      </button>
      <button type="button" aria-label="Cortana" className={app}>
        <span className="h-4 w-4 rounded-full border-2 border-black" />
      </button>
      <button type="button" aria-label="Task View" className={app}>
        <TaskViewIcon />
      </button>
      <button type="button" aria-label="Microsoft Edge" className="flex w-[53px] shrink-0 items-center justify-center">
        <EdgeIcon />
      </button>
      <button
        type="button"
        aria-label="File Explorer"
        className="my-px flex w-[46px] shrink-0 flex-col items-stretch"
      >
        <span className="flex h-[34px] items-center justify-center bg-[#0078d7]">
          <ExplorerIcon />
        </span>
        <span className="mt-px h-0.5 bg-black" />
      </button>
      <button type="button" aria-label="Microsoft Store" className="ml-0.5 flex w-12 shrink-0 items-center justify-center">
        <StoreIcon />
      </button>
      <button type="button" aria-label="Mail" className="flex w-[50px] shrink-0 items-center justify-center">
        <MailIcon />
      </button>
      <div className="flex-1" />
      <button type="button" className="flex w-[84px] shrink-0 items-center justify-center gap-2 border-x border-black text-[13px]">
        <WeatherIcon />
        68°F
      </button>
      <button type="button" aria-label="Show hidden icons" className={tray}>
        <svg viewBox="0 0 12 8" className="h-2 w-3" fill="none" stroke="#000" strokeWidth="1.300" aria-hidden>
          <path d="M1 7l5-5 5 5" />
        </svg>
      </button>
      <button type="button" aria-label="Meet Now" className={tray}>
        <MeetNowIcon />
      </button>
      <button type="button" aria-label="Network" className={tray}>
        <EthernetIcon />
      </button>
      <button type="button" aria-label="Volume muted" className={tray}>
        <MutedIcon />
      </button>
      <button type="button" aria-label="Notifications" className="ml-[63px] flex w-[49px] shrink-0 items-center justify-center">
        <NotificationsIcon />
      </button>
      <button type="button" aria-label="Show desktop" className="w-[26px] shrink-0 border-x border-black" />
    </footer>
  );
}

export default function App() {
  return (
    <div className="flex h-screen flex-col overflow-hidden font-['Open_Sans','Noto_Sans',sans-serif] text-xs text-black">
      <div className="relative min-h-0 flex-1 bg-[linear-gradient(75deg,#00b0fa_0%,#009cf6_25%,#0074dc_55%,#0048c0_80%,#003cb4_100%)]">
        <div className="flex flex-col gap-[34px] pt-2 pl-1">
          <DesktopShortcut icon={<RecycleBinIcon />} label="Recycle Bin" />
          <DesktopShortcut icon={<EdgeShortcutIcon />} label="Microsoft Edge" />
        </div>
        <ExplorerWindow />
        <svg viewBox="0 0 13 20" className="absolute top-[310px] left-[378px] h-5 w-[13px]" aria-hidden>
          <path d="M1 1v15l3.500-3.500L7 18.500l2.500-1L7 12h5z" fill="#fff" stroke="#000" />
        </svg>
      </div>
      <Taskbar />
    </div>
  );
}
